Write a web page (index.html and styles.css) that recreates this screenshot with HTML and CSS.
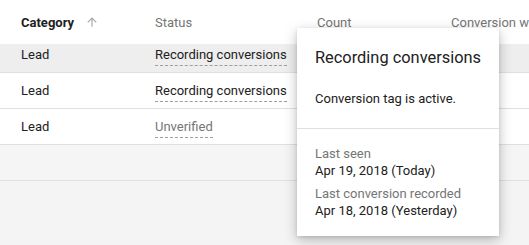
FILE: index.html
```html
<!DOCTYPE html>
<html lang="en">
<head>
    <meta charset="UTF-8">
    <title>Conversions</title>
    <link rel="stylesheet" href="styles.css">
</head>
<body>
    <div class="table">
        <div class="row header">
            <div class="cell col-cat">
                <span class="sorted">Category</span>
                <svg class="sort-icon" viewBox="0 0 24 24" width="14" height="14"><path d="M4 12l1.41 1.41L11 7.83V20h2V7.83l5.58 5.59L20 12l-8-8-8 8z"/></svg>
            </div>
            <div class="cell col-status">Status</div>
            <div class="cell col-count">Count</div>
            <div class="cell col-window">Conversion window</div>
        </div>
        <div class="row first hover">
            <div class="cell col-cat">Lead</div>
            <div class="cell col-status"><span class="status">Recording conversions</span></div>
            <div class="cell col-count"></div>
            <div class="cell col-window"></div>
        </div>
        <div class="row">
            <div class="cell col-cat">Lead</div>
            <div class="cell col-status"><span class="status">Recording conversions</span></div>
            <div class="cell col-count"></div>
            <div class="cell col-window"></div>
        </div>
        <div class="row">
            <div class="cell col-cat">Lead</div>
            <div class="cell col-status"><span class="status muted">Unverified</span></div>
            <div class="cell col-count"></div>
            <div class="cell col-window"></div>
        </div>
        <div class="row empty"></div>
    </div>

    <!-- status popup -->
    <div class="popup">
        <div class="popup-head">
            <div class="popup-title">Recording conversions</div>
            <div class="popup-msg">Conversion tag is active.</div>
        </div>
        <div class="popup-body">
            <div class="label">Last seen</div>
            <div class="value">Apr 19, 2018 (Today)</div>
            <div class="label gap">Last conversion recorded</div>
            <div class="value">Apr 18, 2018 (Yesterday)</div>
        </div>
    </div>
</body>
</html>
```

FILE: styles.css
```css
body {
    margin: 0;
    background: #f4f4f4;
    font-family: Roboto, "Noto Sans", sans-serif;
    font-size: 13px;
    color: #212121;
    overflow: hidden;
    height: 245px;
    position: relative;
}
.table {
    background: #fff;
}
.row {
    display: flex;
    height: 35px;
    border-bottom: 1px solid #e0e0e0;
    background: #fff;
}
.cell {
    flex-shrink: 0;
    line-height: 20px;
    padding-top: 8px;
    white-space: nowrap;
}
.col-cat {
    width: 134px;
    padding-left: 21px;
    display: flex;
    align-items: flex-start;
}
.col-status {
    width: 162px;
}
.col-count {
    width: 134px;
}
.col-window {
    flex: 1 0 auto;
}
.header {
    height: 44px;
    border-bottom: none;
    color: #757575;
}
.header .cell {
    padding-top: 13px;
}
.sorted {
    font-weight: 700;
    color: #212121;
}
.sort-icon {
    fill: #a8a8a8;
    margin: 2px 0 0 11px;
}
.row.first {
    height: 28px;
}
.row.first .cell {
    padding-top: 0;
    line-height: 21px;
}
.hover {
    background: #eeeeee;
}
.status {
    display: inline-block;
    line-height: 20px;
    border-bottom: 1px dashed #9e9e9e;
}
.muted {
    color: #757575;
}
.row.empty {
    background: #f5f5f5;
}
.popup {
    position: absolute;
    left: 297px;
    top: 28px;
    width: 202px;
    height: 208px;
    background: #fff;
    box-shadow: 0 4px 12px rgba(0, 0, 0, 0.26), 0 1px 3px rgba(0, 0, 0, 0.1);
}
.popup-head {
    padding: 18px 18px 19px;
    border-bottom: 1px solid #e0e0e0;
}
.popup-title {
    font-size: 16.4px;
    line-height: 23px;
    white-space: nowrap;
}
.popup-msg {
    margin-top: 20px;
    line-height: 20px;
}
.popup-body {
    padding: 16px 18px 18px;
    line-height: 17px;
}
.label {
    color: #757575;
}
.label.gap {
    margin-top: 6px;
}
```
